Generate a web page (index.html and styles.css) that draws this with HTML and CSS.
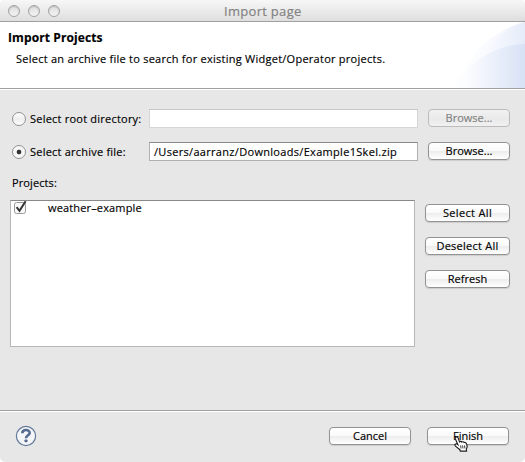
FILE: index.html
```
<!DOCTYPE html>
<html lang="en">
<head>
<meta charset="utf-8">
<title>Import page</title>
<link rel="stylesheet" href="styles.css">
</head>
<body>
<main class="window">
  <header class="titlebar">
    <div class="lights"><i></i><i></i><i></i></div>
    <h1><span class="title-text">Import page</span></h1>
  </header>
  <section class="banner">
    <h2><span class="heading-text">Import Projects</span></h2>
    <p><span class="desc-text">Select an archive file to search for existing Widget/Operator projects.</span></p>
    <svg class="swoosh" width="76" height="66" viewBox="0 0 76 66">
      <defs>
        <linearGradient id="a"><stop offset="0" stop-color="#fff"/><stop offset=".2" stop-color="#fdfdff"/><stop offset="1" stop-color="#e5ecf9"/></linearGradient>
        <linearGradient id="b"><stop offset="0" stop-color="#fff"/><stop offset=".2" stop-color="#fbfcfe"/><stop offset="1" stop-color="#d8e2f6"/></linearGradient>
      </defs>
      <path d="M3 66C17 37 41 8 76 0V66Z" fill="url(#a)" opacity=".55"/>
      <path d="M18 66C31 37 46 7 76 0V66Z" fill="url(#a)"/>
      <path d="M3 66C17 45 41 23 76 22V66Z" fill="url(#b)"/>
    </svg>
  </section>
  <section class="content">
    <div class="source">
      <i class="radio"></i><label class="root-text">Select root directory:</label>
      <div class="field muted"></div><button class="muted" disabled><span class="browse">Browse...</span></button>
    </div>
    <div class="source">
      <i class="radio checked"></i><label class="archive-text">Select archive file:</label>
      <div class="field"><span class="path-text">/Users/aarranz/Downloads/Example1Skel.zip</span></div><button><span class="browse">Browse...</span></button>
    </div>
    <div class="projects-label"><span>Projects:</span></div>
    <div class="projects">
      <div class="list">
        <div class="item">
          <svg width="15" height="15" viewBox="0 0 15 15"><rect x="1.5" y="1.5" width="11" height="11" rx="2" fill="#f8f8f8" stroke="#999"/><path d="M3.6 6.2L6.5 9.8L12.6 .3" fill="none" stroke="#333" stroke-width="2"/></svg>
          <span class="item-text">weather–example</span>
        </div>
      </div>
      <div class="actions">
        <button><span class="all">Select All</span></button>
        <button><span class="deselect">Deselect All</span></button>
        <button><span class="refresh">Refresh</span></button>
      </div>
    </div>
  </section>
  <footer>
    <svg class="help" width="22" height="22" viewBox="0 0 22 22"><circle cx="11" cy="11" r="9.6" fill="#f4f5f7" stroke="#657b9b" stroke-width="1.2"/><path d="M7.3 8.3C7.4 3.9 14.7 4 14.7 7.9C14.7 10.3 11 10.3 11 13.2" fill="none" stroke="#536b90" stroke-width="2.6"/><rect x="9.5" y="14.5" width="3" height="2.8" rx=".8" fill="#536b90"/></svg>
    <button><span class="cancel">Cancel</span></button>
    <button><span class="finish">Finish</span></button>
  </footer>
  <svg class="cursor" width="15" height="17" viewBox="0 0 17 19"><path d="M2 1.2C3.4.2 4.4 1.3 4.8 2.5L6.3 6.5C7.3 5.5 8.5 6 8.8 6.7C9.8 6 11 6.4 11.4 7.3C12.8 6.8 14 7.6 14.3 9L15 12L14 14.8L14.2 17H7.2L6.7 15.4L1.7 11.3C.2 9.6 1.8 8.2 3.4 9L4.4 9.7L1.6 3.2C1.3 2.4 1.3 1.7 2 1.2Z" fill="#fff" stroke="#222" stroke-width="1.3"/><path d="M7.5 10.5L8 14M9.7 10.5L10.2 14M11.9 10.5L12.4 14" stroke="#222"/></svg>
</main>
</body>
</html>
```
FILE: styles.css
```
* { box-sizing: border-box; }
body { margin: 0; background: #fff; color: #000; font: 11px/14px "Open Sans", "Noto Sans", sans-serif; }
h1, h2, p { margin: 0; font-size: inherit; font-weight: 400; }
span, label { white-space: nowrap; -webkit-text-stroke: .15px currentColor; }
.window { position: relative; display: flex; flex-direction: column; width: 525px; height: 462px; overflow: hidden; background: #e7e7e7; border-radius: 5px; }
.titlebar { display: flex; align-items: center; height: 22px; padding-left: 8px; background: linear-gradient(#f7f7f7, #dedede); border-bottom: 1px solid #a0a0a0; }
.lights { display: flex; gap: 8px; width: 216px; }
.lights i { width: 12px; height: 12px; border: 1px solid #a4a4a4; border-radius: 50%; background: linear-gradient(#dedede, #f3f3f3); box-shadow: inset 0 1px 1px #bbb; }
.titlebar h1 { font-size: 13px; line-height: 18px; color: #818181; }
.title-text { letter-spacing: .3px; }
.banner { position: relative; height: 68px; padding: 9px 8px 0; background: #fff; border-bottom: 1px solid #fff; box-shadow: inset 0 -1px #a0a0a0; }
.banner h2 { font-size: 12px; font-weight: 700; line-height: 14px; }
.banner p { padding: 7px 0 0 8px; }
.heading-text { letter-spacing: .1px; }
.desc-text { letter-spacing: .255px; }
.root-text, .archive-text { letter-spacing: .22px; }
.path-text { letter-spacing: .31px; }
.item-text { letter-spacing: .15px; margin-top: -2px; }
.all { letter-spacing: .35px; }
.deselect { letter-spacing: .25px; }
.swoosh { position: absolute; right: 0; top: 0; }
.content { height: 320px; padding: 19px 15px 0 10px; }
.source { display: flex; align-items: center; height: 19px; margin-bottom: 14px; }
.radio { width: 14px; height: 14px; margin: 0 4px 0 2px; border: 1px solid #929292; border-radius: 50%; background: linear-gradient(#fff, #eee 50%, #fff); }
.radio.checked { background: radial-gradient(circle, #333 0 2px, #f7f7f7 2.7px); }
.source label { width: 119px; }
.field { width: 269px; height: 19px; padding: 2px 4px; background: #fff; border: 1px solid #b0b0b0; border-top-color: #898989; }
.field.muted { border-color: #d6d6d6; border-top-color: #c6c6c6; }
button { display: flex; align-items: center; justify-content: center; width: 82px; height: 18px; padding: 0; font: inherit; color: #000; border: 1px solid #929292; border-radius: 4px; background: linear-gradient(#fff 0%, #fafafa 48%, #ededed 52%, #fff); box-shadow: 0 1px 1px #ccc; }
button.muted { color: #828282; border-color: #bbb; background: linear-gradient(#f2f2f2, #e9e9e9 55%, #f1f1f1); box-shadow: none; }
.source button { margin: -1px 0 0 10px; }
.projects-label { height: 25px; padding: 1px 0 0 2px; letter-spacing: .1px; }
.projects { display: flex; justify-content: space-between; }
.list { width: 405px; height: 147px; background: #fff; border: 1px solid #b7b7b7; border-top-color: #888; }
.item { display: flex; align-items: center; height: 15px; padding-left: 2px; }
.item svg { margin-right: 20px; }
.actions { display: flex; flex-direction: column; gap: 15px; padding-top: 4px; }
.actions button { width: 85px; }
footer { display: flex; align-items: flex-start; height: 52px; padding: 16px 16px 0 15px; border-top: 1px solid #a0a0a0; box-shadow: inset 0 1px #fff; }
.help { margin: -2px auto 0 0; }
footer button + button { margin-left: 16px; }
.cursor { position: absolute; left: 454px; top: 436px; }
```
